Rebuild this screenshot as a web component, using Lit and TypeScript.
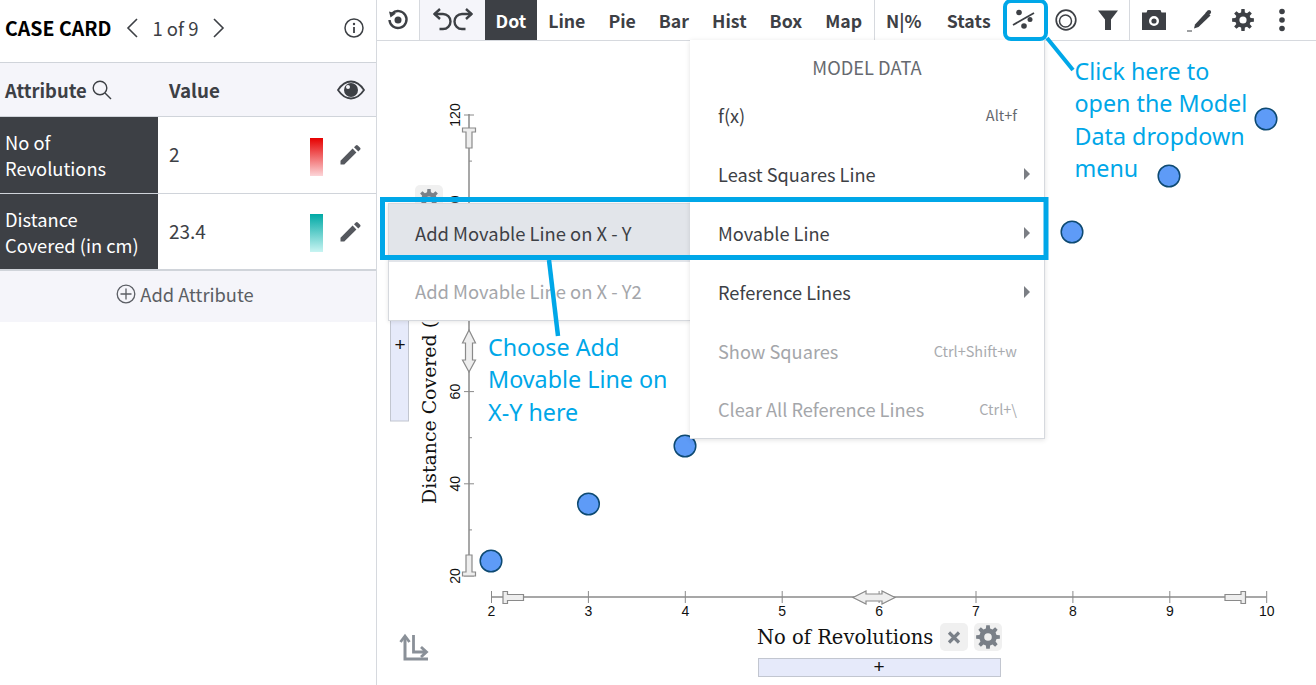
import { LitElement, html, css, svg } from "lit";
import { customElement } from "lit/decorators.js";

function gearPath(cx: number, cy: number, R: number, r: number, hole: number, teeth = 8) {
  let d = "";
  const n = teeth;
  for (let i = 0; i < n; i++) {
    const a = (i / n) * Math.PI * 2;
    const w = Math.PI / n;
    const pts: [number, number][] = [
      [r, a - w * 0.62],
      [R, a - w * 0.38],
      [R, a + w * 0.38],
      [r, a + w * 0.62],
    ];
    for (const [rad, an] of pts) {
      d += `${d ? "L" : "M"}${(cx + rad * Math.sin(an)).toFixed(2)} ${(cy - rad * Math.cos(an)).toFixed(2)}`;
    }
  }
  d += `Z M${cx - hole} ${cy}a${hole} ${hole} 0 1 0 ${hole * 2} 0a${hole} ${hole} 0 1 0 ${-hole * 2} 0Z`;
  return d;
}

const pencil = html`<svg class="pen" viewBox="0 0 24 24" width="24" height="24"><path fill="#55585e" d="M2.500 17.700 14.600 5.600l3.800 3.800L6.300 21.500H2.500zM16 4.200l1.800-1.800a1.400 1.400 0 0 1 2 0l2.300 2.300a1.400 1.400 0 0 1 0 2L20.300 8.500z"/></svg>`;

const X0 = 491.5, XS = 96.9;
const yAt = (v: number) => 576 - ((v - 20) / 20) * 92.2;
const xAt = (v: number) => X0 + (v - 2) * XS;
const points: [number, number][] = [[491, 561], [588.5, 504], [685, 446], [1072, 232], [1169, 176], [1266, 119]];

@customElement("app-root")
export class AppRoot extends LitElement {
  static styles = css`
    :host { display: block; width: 1316px; height: 685px; position: relative; overflow: hidden; background: #fff;
      font-family: "Noto Sans CJK SC", "Noto Sans", sans-serif; color: #3d4045; }
    .page { display: flex; height: 685px; }
    .side { width: 376px; border-right: 1px solid #d6d9de; flex: none; }
    .case-head { display: flex; align-items: center; padding: 0 12px 6px 5px; box-sizing: border-box; border-bottom: 1px solid #d0d4da; height: 63px; }
    .case-title { font-size: 19.500px; font-weight: 700; color: #000; line-height: 24px; margin-right: 15px; }
    .count { font-size: 18.500px; line-height: 24px; margin: 0 15px 0 14px; color: #3d4045; }
    .info { margin-left: auto; }
    .attr-head { height: 53px; background: #f5f5fa; display: flex; align-items: center; border-bottom: 1px solid #d0d4da; font-size: 18.800px; font-weight: 700; line-height: 24px; }
    .attr-head .a { width: 158px; padding-left: 5px; box-sizing: border-box; display: flex; align-items: center; gap: 5px; font-size: 18.400px; }
    .attr-head .v { flex: 1; padding-left: 11px; }
    .attr-head svg.eye { margin-right: 11px; }
    .row { display: flex; height: 76px; border-bottom: 1px solid #d0d4da; }
    .row.last { height: 75px; border-bottom-width: 2px; }
    .row .name { width: 158px; background: #3d4045; color: #fff; box-sizing: border-box; padding-left: 5px; font-size: 18.300px; line-height: 26px; display: flex; align-items: center; }
    .row .val { flex: 1; padding-left: 11px; font-size: 19px; display: flex; align-items: center; }
    .num { padding-bottom: 3px; }
    .swatch { width: 13px; height: 38px; margin-left: auto; margin-right: 15px; margin-top: 3px; }
    .swatch.red { background: linear-gradient(#e60000, #fcd5d8); }
    .swatch.teal { background: linear-gradient(#00a9a5, #c8f4f2); }
    .pen { margin-right: 14px; margin-top: 0; }
    .add { height: 51px; background: #f5f5fa; display: flex; align-items: center; justify-content: center; gap: 4px; font-size: 18.300px; color: #5b5e64; padding: 0 6px 5px 0; box-sizing: border-box; }
    .main { flex: 1; display: flex; flex-direction: column; min-width: 0; }
    .bar { height: 40px; border-bottom: 1px solid #d6d9de; display: flex; align-items: stretch; flex: none; font-size: 17.700px; font-weight: 700; box-sizing: content-box; }
    .ib { display: flex; align-items: center; justify-content: center; }
    .reset { width: 43px; border-right: 1px solid #d6d9de; box-sizing: border-box; }
    .undo { width: 65px; background: #f5f5fa; }
    .tab { display: flex; align-items: center; padding: 0 11.500px 1px; line-height: 24px; }
    .tab.on { background: #3d4045; color: #fff; padding: 0 10.500px 1px; }
    .tab.div { border-left: 1px solid #d6d9de; padding-right: 13.500px; }
    .tab.stats { padding-right: 12.500px; letter-spacing: 0.1px; }
    .tool { width: 42px; }
    .tool.div { border-left: 1px solid #d6d9de; width: 48px; box-sizing: border-box; }
    .tool.w44 { width: 44px; }
    .tool.w34 { width: 34px; }
    .chart { flex: 1; position: relative; }
    .chart svg { position: absolute; left: 0; top: 0; }
    .tick { font-family: "Liberation Sans", sans-serif; font-size: 14px; fill: #111; }
    .axis-name { font-family: "DejaVu Serif", "Liberation Serif", serif; font-size: 19.500px; fill: #111; }
    .axis-name.y { font-size: 18.900px; }
    .menu { position: absolute; left: 690px; top: 40px; width: 355px; height: 399px; background: #fff; border: 1px solid #d6d9de; border-width: 0 1px 1px 0; box-sizing: border-box; box-shadow: 0 1px 5px rgba(0,0,0,.12); }
    .menu-h { height: 46px; display: flex; align-items: center; justify-content: center; font-size: 18.300px; color: #66696f; line-height: 24px; padding-top: 8px; box-sizing: border-box; }
    .mi { height: 58.800px; display: flex; align-items: center; justify-content: space-between; padding: 0 14px 0 28px; font-size: 18.200px; line-height: 24px; color: #3d4045; }
    .mi.off { color: #a4a6aa; }
    .mi small { font-size: 14.500px; color: #66696f; margin-right: 13px; }
    .mi.off small { color: #a9abaf; }
    .tri { width: 0; height: 0; border-left: 6px solid #7b7e84; border-top: 6.500px solid transparent; border-bottom: 6.500px solid transparent; }
    .sub { position: absolute; left: 388px; top: 203px; width: 303px; height: 118px; background: #fff; border: 1px solid #d6d9de; box-sizing: border-box; box-shadow: 0 1px 4px rgba(0,0,0,.1); }
    .si { height: 58px; display: flex; align-items: center; padding-left: 26px; font-size: 18.400px; line-height: 24px; color: #3d4045; }
    .si.hl { background: #e2e5ea; }
    .si.off { color: #a4a6aa; }
    .anno-svg { position: absolute; left: 0; top: 0; pointer-events: none; }
    .note { position: absolute; color: #00a7e8; font-family: "Noto Sans", sans-serif; font-size: 23.300px; line-height: 32.400px; white-space: nowrap; }
    .n1 { left: 1074.500px; top: 55px; }
    .n2 { left: 488px; top: 331px; }
  `;

  render() {
    const xTicks = [2, 3, 4, 5, 6, 7, 8, 9, 10];
    const yTicks = [20, 40, 60, 80, 100, 120];
    const yMinor = [30, 50, 70, 90, 110];
    return html`
      <div class="page">
        <div class="side">
          <div class="case-head">
            <span class="case-title">CASE CARD</span>
            <svg width="12" height="20" viewBox="0 0 12 20"><path d="M11 1 2 10l9 9" fill="none" stroke="#3d4045" stroke-width="1.600"/></svg>
            <span class="count">1 of 9</span>
            <svg width="12" height="20" viewBox="0 0 12 20"><path d="M1 1l9 9-9 9" fill="none" stroke="#3d4045" stroke-width="1.600"/></svg>
            <svg class="info" width="20" height="20" viewBox="0 0 20 20"><circle cx="10" cy="10" r="9" fill="none" stroke="#3d4045" stroke-width="1.500"/><circle cx="10" cy="6" r="1.200" fill="#3d4045"/><path d="M10 9v6" stroke="#3d4045" stroke-width="1.800"/></svg>
          </div>
          <div class="attr-head">
            <div class="a">Attribute <svg width="20" height="20" viewBox="0 0 20 20"><circle cx="8" cy="8" r="6.800" fill="none" stroke="#3d4045" stroke-width="1.400"/><path d="M13 13l6 6" stroke="#3d4045" stroke-width="1.400"/></svg></div>
            <div class="v">Value</div>
            <svg class="eye" width="28" height="20" viewBox="0 0 28 20"><path d="M1 10C5 4 9 1.500 14 1.500S23 4 27 10c-4 6-8 8.500-13 8.500S5 16 1 10z" fill="none" stroke="#3d4045" stroke-width="1.800"/><circle cx="14" cy="10" r="7" fill="#3d4045"/><circle cx="11" cy="7" r="2" fill="#f5f5fa"/></svg>
          </div>
          <div class="row">
            <div class="name"><span>No of<br />Revolutions</span></div>
            <div class="val"><span class="num">2</span><div class="swatch red"></div>${pencil}</div>
          </div>
          <div class="row last">
            <div class="name"><span>Distance<br />Covered (in cm)</span></div>
            <div class="val"><span class="num">23.4</span><div class="swatch teal"></div>${pencil}</div>
          </div>
          <div class="add">
            <svg width="20" height="20" viewBox="0 0 20 20"><circle cx="10" cy="10" r="8.800" fill="none" stroke="#5b5e64" stroke-width="1.300"/><path d="M10 4.500v11M4.500 10h11" stroke="#5b5e64" stroke-width="1.300"/></svg>
            <span>Add Attribute</span>
          </div>
        </div>
        <div class="main">
          <div class="bar">
            <div class="ib reset"><svg width="22" height="22" viewBox="0 0 22 22"><path d="M5 4.500A8.500 8.500 0 1 1 2.500 11" fill="none" stroke="#3d4045" stroke-width="2.400"/><path d="M2 2.500l7 2-5.500 4z" fill="#3d4045"/><circle cx="11" cy="11" r="3.500" fill="#3d4045"/></svg></div>
            <div class="ib undo"><svg width="40" height="24" viewBox="0 0 40 24"><path d="M1 6H10a7.500 7.500 0 0 1 0 15H6.500M39 6H29a7.500 7.500 0 0 0 0 15h3.500" fill="none" stroke="#3d4045" stroke-width="2.400"/><path d="M7 1 1.500 6 7 11M33 1l5.500 5L33 11" fill="none" stroke="#3d4045" stroke-width="2.400"/></svg></div>
            <div class="tab on">Dot</div>
            <div class="tab">Line</div>
            <div class="tab">Pie</div>
            <div class="tab">Bar</div>
            <div class="tab">Hist</div>
            <div class="tab">Box</div>
            <div class="tab">Map</div>
            <div class="tab div">N|%</div>
            <div class="tab stats">Stats</div>
            <div class="ib tool"><svg width="24" height="24" viewBox="0 0 24 24"><path d="M1 17 22 5" stroke="#3d4045" stroke-width="1.800"/><circle cx="7" cy="4.500" r="2.800" fill="#3d4045"/><circle cx="18" cy="11.500" r="2.500" fill="#3d4045"/><circle cx="12" cy="18" r="2.800" fill="#3d4045"/></svg></div>
            <div class="ib tool"><svg width="24" height="24" viewBox="0 0 24 24"><circle cx="12" cy="12" r="9.800" fill="none" stroke="#3d4045" stroke-width="1.700"/><circle cx="11.500" cy="13" r="6" fill="none" stroke="#3d4045" stroke-width="1.500"/></svg></div>
            <div class="ib tool"><svg width="22" height="22" viewBox="0 0 22 22"><path d="M1 1.500h20l-7 9v10.500h-6V10.500z" fill="#3d4045"/></svg></div>
            <div class="ib tool div"><svg width="26" height="22" viewBox="0 0 26 22"><path fill-rule="evenodd" fill="#3d4045" d="M1 3.500h4.500l1-2.500h13l1 2.500H25V21H1zM13 7a5 5 0 1 0 0 10 5 5 0 0 0 0-10z"/><circle cx="13" cy="12" r="2.600" fill="#3d4045"/></svg></div>
            <div class="ib tool w44"><svg width="26" height="24" viewBox="0 0 26 24"><path d="M9 16.500 20.500 4l4 3.500L12.500 19l-4.500 1.500z" fill="#3d4045"/><path d="M19.500 5l2-2.500c1-.8 2.200-.8 3 0s.8 2 0 3l-2 2z" fill="#3d4045"/><path d="M1 23h5" stroke="#3d4045" stroke-width="1"/></svg></div>
            <div class="ib tool w44"><svg width="24" height="24" viewBox="0 0 24 24"><path fill="#3d4045" fill-rule="evenodd" d="${gearPath(12, 12, 11, 7.800, 3.600)}"/></svg></div>
            <div class="ib tool w34"><svg width="8" height="24" viewBox="0 0 8 24"><circle cx="4" cy="3.500" r="2.800" fill="#3d4045"/><circle cx="4" cy="12" r="2.800" fill="#3d4045"/><circle cx="4" cy="20.500" r="2.800" fill="#3d4045"/></svg></div>
          </div>
          <div class="chart">
            <svg width="939" height="644" viewBox="377 41 939 644">
              <rect x="415" y="185" width="28" height="30" rx="5" fill="#f0f0f0"/>
              <path fill="#7a8088" fill-rule="evenodd" d="${gearPath(429, 200, 11, 8, 3.500)}"/>
              <text class="axis-name y" transform="translate(436 504) rotate(-90)">Distance Covered (in cm)</text>
              <rect x="390.500" y="300" width="18" height="121" fill="#e6eafa" stroke="#c2c6d0"/>
              <text x="400" y="351" text-anchor="middle" font-family="Liberation Sans" font-size="19" fill="#111">+</text>
              <path d="M469 114V576M491.500 597H1266.500" stroke="#8a8a8a" stroke-width="1.500" fill="none"/>
              ${yTicks.map((v) => svg`
                <path d="M464 ${yAt(v)}h10" stroke="#8a8a8a"/>
                <text class="tick" text-anchor="middle" transform="translate(459.500 ${yAt(v)}) rotate(-90)">${v}</text>`)}
              ${yMinor.map((v) => svg`<path d="M469 ${yAt(v)}h3" stroke="#8a8a8a"/>`)}
              ${xTicks.map((v) => svg`
                <path d="M${xAt(v)} 591v12" stroke="#8a8a8a"/>
                <text class="tick" text-anchor="middle" x="${xAt(v)}" y="616">${v}</text>`)}
              <path d="M462.500 128h13v4h-3.500v16h-6v-16h-3.500z" fill="#eee" stroke="#8a8a8a" stroke-width="1.200"/>
              <path d="M462.500 576h13v-4h-3.500v-17h-6v17h-3.500z" fill="#eee" stroke="#8a8a8a" stroke-width="1.200"/>
              <path d="M469 330l6.500 13h-3v17h3L469 372l-6.500-12h3v-17h-3z" fill="#eee" stroke="#8a8a8a" stroke-width="1.200"/>
              <path d="M503 591.500h4.500v3h16v6h-16v3H503z" fill="#eee" stroke="#8a8a8a" stroke-width="1.200"/>
              <path d="M1245.500 591.500h-4.500v3h-16v6h16v3h4.500z" fill="#eee" stroke="#8a8a8a" stroke-width="1.200"/>
              <path d="M853 597.500l13-6.500v3h16v-3l13 6.500-13 6.500v-3h-16v3z" fill="#eee" stroke="#8a8a8a" stroke-width="1.200"/>
              ${points.map(([x, y]) => svg`<circle cx="${x}" cy="${y}" r="10.800" fill="#5e9bf7" stroke="#0e4a72" stroke-width="1.500"/>`)}
              <text class="axis-name" x="757" y="644">No of Revolutions</text>
              <rect x="940" y="623" width="28" height="28" rx="5" fill="#f0f0f0"/>
              <path d="M949 632.500l10 10M959 632.500l-10 10" stroke="#7a8088" stroke-width="3.200"/>
              <rect x="974" y="623" width="28" height="28" rx="5" fill="#f0f0f0"/>
              <path fill="#7a8088" fill-rule="evenodd" d="${gearPath(988, 637, 12, 8.800, 3.800)}"/>
              <rect x="758.500" y="658.500" width="242" height="18" fill="#e6eafa" stroke="#c2c6d0"/>
              <text x="879" y="673" text-anchor="middle" font-family="Liberation Sans" font-size="19" fill="#111">+</text>
              <path d="M405 637v22h23" fill="none" stroke="#8a9098" stroke-width="3"/>
              <path d="M400.500 642l4.500-6 4.500 6M413.500 635v17h12M421 647l5.500 5-5.500 5" fill="none" stroke="#8a9098" stroke-width="2.800"/>
            </svg>
          </div>
        </div>
      </div>

      <div class="sub">
        <div class="si hl">Add Movable Line on X - Y</div>
        <div class="si off">Add Movable Line on X - Y2</div>
      </div>
      <div class="menu">
        <div class="menu-h">MODEL DATA</div>
        <div class="mi"><span>f(x)</span><small>Alt+f</small></div>
        <div class="mi"><span>Least Squares Line</span><i class="tri"></i></div>
        <div class="mi"><span>Movable Line</span><i class="tri"></i></div>
        <div class="mi"><span>Reference Lines</span><i class="tri"></i></div>
        <div class="mi off"><span>Show Squares</span><small>Ctrl+Shift+w</small></div>
        <div class="mi off"><span>Clear All Reference Lines</span><small>Ctrl+\\</small></div>
      </div>
      <svg class="anno-svg" width="1316" height="685" viewBox="0 0 1316 685">
        <rect x="382.500" y="199.500" width="663.500" height="58" fill="none" stroke="#00a7e8" stroke-width="5"/>
        <rect x="1005" y="1" width="41" height="38" rx="6" fill="none" stroke="#00a7e8" stroke-width="4"/>
        <path d="M1047 38 1073 70" stroke="#00a7e8" stroke-width="4"/>
        <path d="M549 260 558 336" stroke="#00a7e8" stroke-width="4.500"/>
      </svg>
      <div class="note n1">Click here to<br />open the Model<br />Data dropdown<br />menu</div>
      <div class="note n2">Choose Add<br />Movable Line on<br />X-Y here</div>
    `;
  }
}
